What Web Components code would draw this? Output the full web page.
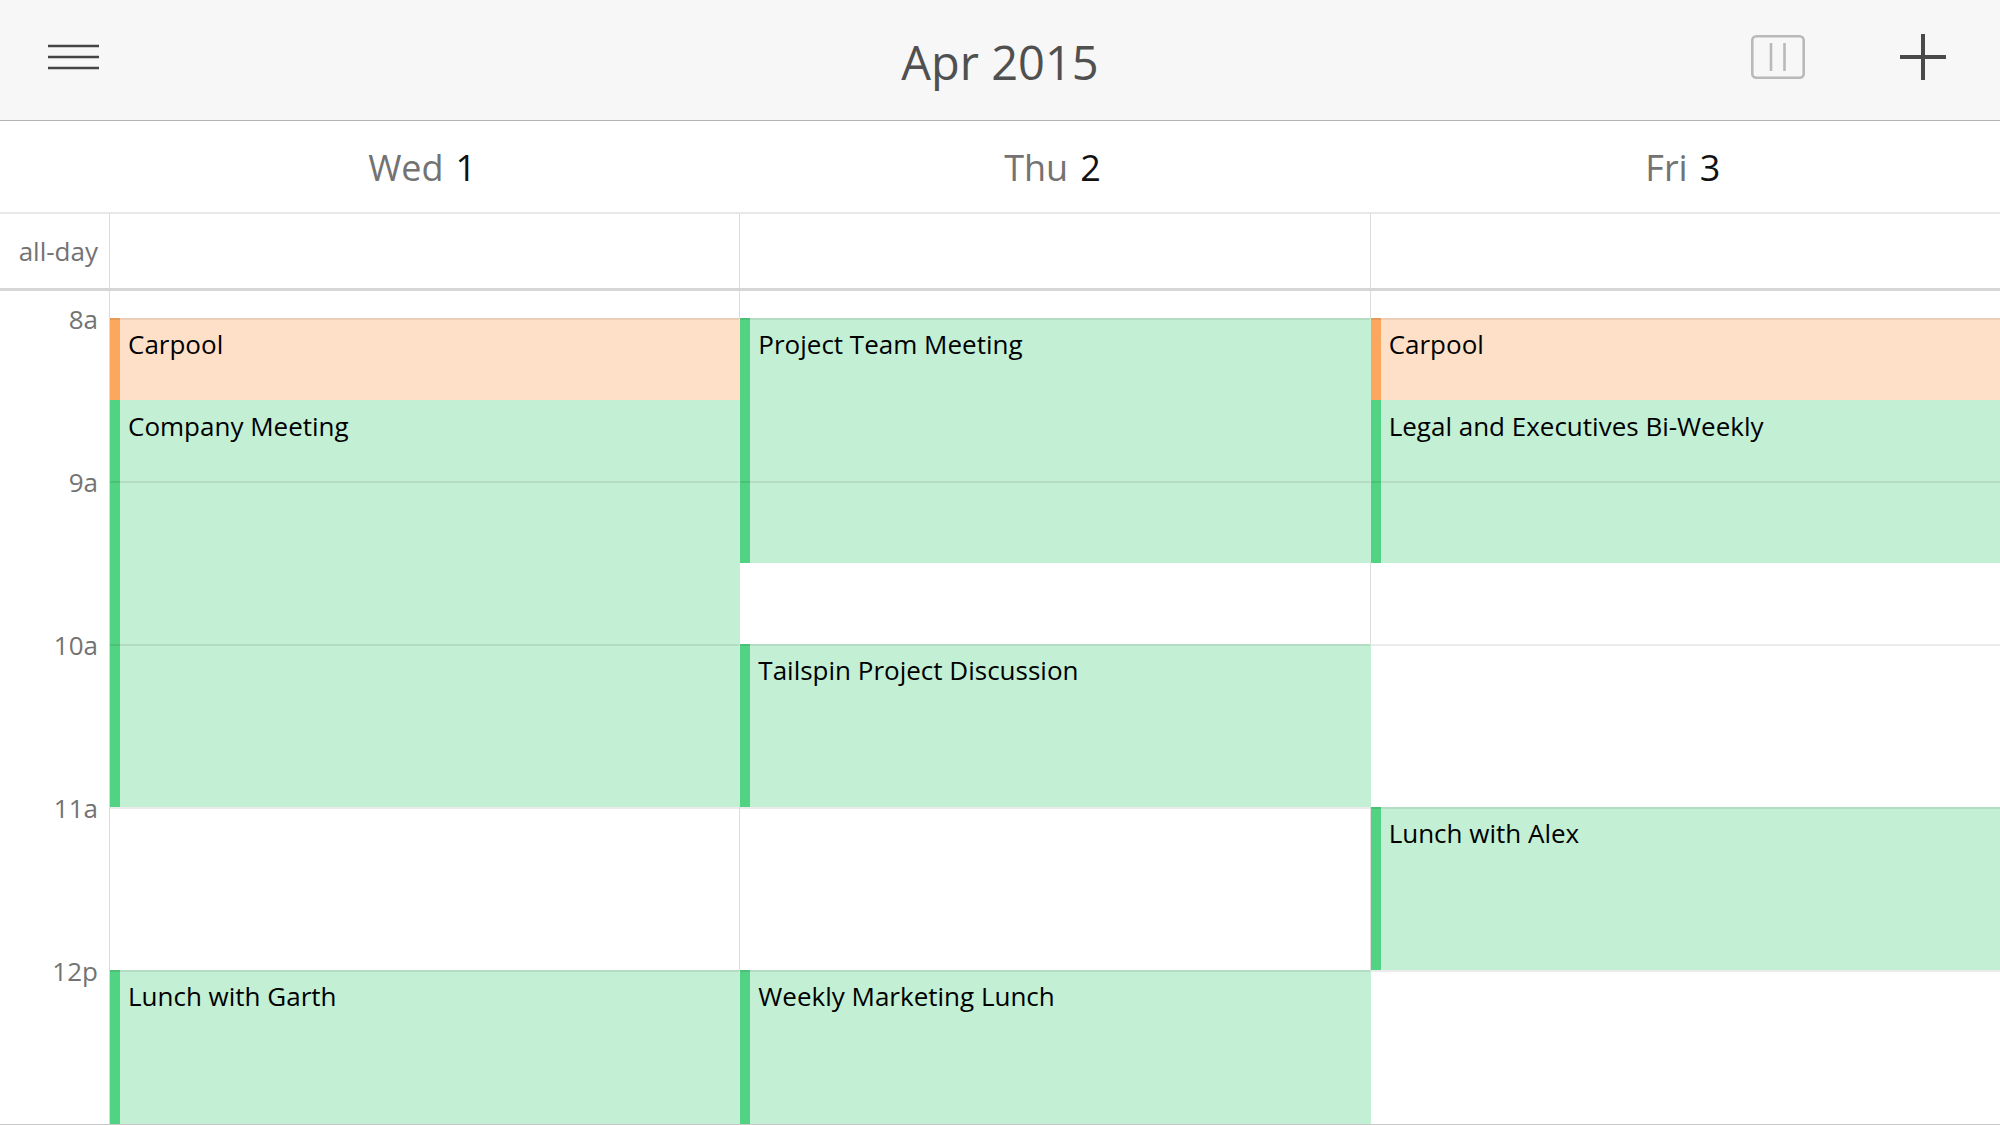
<!DOCTYPE html>
<html lang="en">
<head>
<meta charset="utf-8">
<meta name="viewport" content="width=device-width, initial-scale=1">
<title>Calendar</title>
<style>
  :root {
    --gutter: 109px;
    --half-a: 82px;
    --half-b: 81px;
    --line: #dcdcdc;
  }
  body {
    margin: 0;
    background: #fff;
    color: #000;
    font-family: "Open Sans", "Noto Sans", sans-serif;
    font-size: 26px;
    line-height: 36px;
  }
</style>
</head>
<body>

<calendar-app>
  <calendar-toolbar slot="toolbar">
    <icon-button slot="start" icon="menu" label="Menu"></icon-button>
    Apr 2015
    <icon-button slot="end" icon="columns" label="Change view"></icon-button>
    <icon-button slot="end" icon="plus" label="New event"></icon-button>
  </calendar-toolbar>

  <day-heading slot="headings" day="1">Wed</day-heading>
  <day-heading slot="headings" day="2">Thu</day-heading>
  <day-heading slot="headings" day="3">Fri</day-heading>

  <!-- start and span count half hours, 1 is 8:00 -->
  <day-column slot="days">
    <calendar-event color="orange" start="1" span="1">Carpool</calendar-event>
    <calendar-event start="2" span="5">Company Meeting</calendar-event>
    <calendar-event start="9" span="2">Lunch with Garth</calendar-event>
  </day-column>
  <day-column slot="days">
    <calendar-event start="1" span="3">Project Team Meeting</calendar-event>
    <calendar-event start="5" span="2">Tailspin Project Discussion</calendar-event>
    <calendar-event start="9" span="2">Weekly Marketing Lunch</calendar-event>
  </day-column>
  <day-column slot="days">
    <calendar-event color="orange" start="1" span="1">Carpool</calendar-event>
    <calendar-event start="2" span="2">Legal and Executives Bi-Weekly</calendar-event>
    <calendar-event start="7" span="2">Lunch with Alex</calendar-event>
  </day-column>
</calendar-app>

<script>
const ICONS = {
  menu: `
    <svg width="51" height="26" viewBox="0 0 51 26" stroke="#444" stroke-width="2.6">
      <path d="M0 2h51M0 13h51M0 24h51"/>
    </svg>`,
  columns: `
    <svg width="54" height="44" viewBox="0 0 54 44" fill="none" stroke="#b9b9b9" stroke-width="2.6">
      <rect x="1.3" y="1.3" width="51.4" height="41.4" rx="4"/>
      <path d="M20 8v28M33.5 8v28"/>
    </svg>`,
  plus: `
    <svg width="46" height="46" viewBox="0 0 46 46" stroke="#4a4a4a" stroke-width="4">
      <path d="M0 23h46M23 0v46"/>
    </svg>`
};

customElements.define('icon-button', class extends HTMLElement {
  constructor() {
    super();
    const root = this.attachShadow({ mode: 'open' });
    root.innerHTML = `
    <style>
      :host { display: block; }
      button {
        display: block;
        padding: 0;
        border: 0;
        background: none;
        cursor: pointer;
      }
      svg { display: block; }
    </style>
    <button type="button" aria-label="${this.getAttribute('label')}">${ICONS[this.getAttribute('icon')]}</button>
    `;
  }
});

customElements.define('calendar-toolbar', class extends HTMLElement {
  constructor() {
    super();
    const root = this.attachShadow({ mode: 'open' });
    root.innerHTML = `
    <style>
      :host {
        display: grid;
        grid-template-columns: 1fr auto 1fr;
        align-items: center;
        height: 120px;
        padding: 0 51px;
        border-bottom: 1px solid #b4b4b4;
        background: #f7f7f7;
      }
      .group {
        display: flex;
        align-items: center;
        gap: 95px;
        padding-bottom: 6px;
        margin: 0 -3px;
      }
      .end { justify-content: flex-end; margin: 0 3px; }
      h1 {
        margin: 0;
        padding-top: 4px;
        color: #505050;
        font-size: 47px;
        font-weight: 400;
        line-height: 64px;
      }
    </style>
    <div class="group"><slot name="start"></slot></div>
    <h1><slot></slot></h1>
    <div class="group end"><slot name="end"></slot></div>
    `;
  }
});

customElements.define('day-heading', class extends HTMLElement {
  constructor() {
    super();
    const root = this.attachShadow({ mode: 'open' });
    root.innerHTML = `
    <style>
      :host {
        display: flex;
        justify-content: center;
        align-items: center;
        gap: 12px;
        padding: 2px 4px 0 0;
        color: #737373;
        font-size: 36px;
      }
      b {
        color: #111;
        font-weight: 400;
      }
    </style>
    <span><slot></slot></span>
    <b>${this.getAttribute('day')}</b>
    `;
  }
});

customElements.define('calendar-event', class extends HTMLElement {
  constructor() {
    super();
    const root = this.attachShadow({ mode: 'open' });
    this.style.gridRow = `${this.getAttribute('start')} / span ${this.getAttribute('span')}`;
    root.innerHTML = `
    <style>
      /* reaches over the border of the next day */
      :host {
        display: block;
        grid-column: 1;
        box-sizing: border-box;
        min-width: 0;
        margin-right: -1px;
        padding: 8px 8px 0;
        border-left: 10px solid #52d283;
        background: #c3efd4;
        overflow: hidden;
        position: relative;
      }
      :host([color="orange"]) {
        border-color: #fca75e;
        background: #fee0c8;
      }
    </style>
    <slot></slot>
    `;
  }
});

customElements.define('day-column', class extends HTMLElement {
  constructor() {
    super();
    const root = this.attachShadow({ mode: 'open' });
    const lines = [1, 3, 5, 7, 9].map((row) => `<div class="hour" style="grid-row: ${row}"></div>`).join('');
    root.innerHTML = `
    <style>
      :host {
        display: grid;
        grid-template-columns: minmax(0, 1fr);
        grid-template-rows: repeat(5, var(--half-a) var(--half-b));
        padding-top: 27px;
        border-left: 1px solid var(--line);
      }
      .hour {
        grid-column: 1;
        border-top: 2px solid rgba(0, 0, 0, .08);
        position: relative;
        z-index: 1;
        pointer-events: none;
      }
    </style>
    <slot></slot>
    ${lines}
    `;
  }
});

customElements.define('calendar-app', class extends HTMLElement {
  constructor() {
    super();
    const root = this.attachShadow({ mode: 'open' });
    const hours = ['8a', '9a', '10a', '11a', '12p'].map((hour) => `<div class="time">${hour}</div>`).join('');
    root.innerHTML = `
    <style>
      :host {
        display: flex;
        flex-direction: column;
        box-sizing: border-box;
        height: 100vh;
        border-bottom: 1px solid #c8c8c8;
        overflow: hidden;
      }
      .row {
        display: grid;
        grid-template-columns: var(--gutter) repeat(3, minmax(0, 1fr));
        flex: none;
      }
      .headings {
        height: 91px;
        border-bottom: 2px solid #e8e8e8;
      }
      .all-day {
        height: 74px;
        border-bottom: 3px solid #d6d6d6;
      }
      .all-day .cell { border-left: 1px solid var(--line); }
      .schedule {
        flex: 1;
        min-height: 0;
        align-items: start;
        overflow: hidden;
      }
      .label {
        align-self: center;
      }
      .label, .times {
        padding-right: 11px;
        color: #737373;
        text-align: right;
      }
      .times { padding-top: 10px; }
      .time { height: calc(var(--half-a) + var(--half-b)); }
    </style>
    <slot name="toolbar"></slot>
    <div class="row headings">
      <div></div>
      <slot name="headings"></slot>
    </div>
    <div class="row all-day">
      <div class="label">all-day</div>
      <div class="cell"></div>
      <div class="cell"></div>
      <div class="cell"></div>
    </div>
    <div class="row schedule">
      <div class="times">${hours}</div>
      <slot name="days"></slot>
    </div>
    `;
  }
});
</script>
</body>
</html>
